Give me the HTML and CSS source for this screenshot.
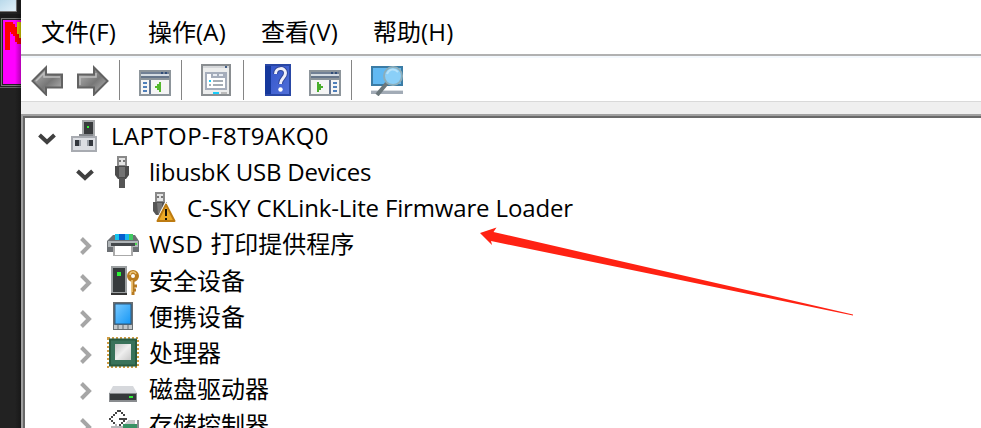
FILE: index.html
```html
<!DOCTYPE html>
<html lang="zh-CN">
<head>
<meta charset="utf-8">
<title>设备管理器</title>
<link rel="stylesheet" href="styles.css">
</head>
<body>
<div class="desktop">
  <svg class="backdrop" viewBox="0 0 21 428" shape-rendering="crispEdges">
    <defs><linearGradient id="sky" x2="1" y2="1"><stop stop-color="#b9d9ea"/><stop offset="1" stop-color="#e3f1fa"/></linearGradient>
    <linearGradient id="shade"><stop stop-color="#000" stop-opacity="0"/><stop offset="1" stop-color="#000" stop-opacity=".3"/></linearGradient></defs>
    <rect width="21" height="428" fill="#222"/>
    <rect width="16" height="11" fill="url(#sky)"/><path d="M16 0h1v12H0v-1h16z" fill="#777"/>
    <path d="M0 14h21v4H0z" fill="#1b1b1b"/>
    <path d="M1 18h20v1H2v66h19v1H1z" fill="#777"/><path d="M0 87h21v1H0z" fill="#666"/>
    <rect x="3" y="20" width="18" height="64" fill="#f0f"/>
    <path d="M17 22h4v16h-4v-4h-2v-6h2z" fill="#e3d800"/>
    <path d="M5 22h8v2h2v3h2v7h2v4h2v6h-4v-2h-2v-6h-2v-2h-2v-2h-1v18H5z" fill="#f00"/>
    <rect x="15" width="6" height="428" fill="url(#shade)"/>
  </svg>
  <main class="window">
    <nav class="menu">
      <span class="m1">文件<i>(F)</i></span><span class="m2">操作<i>(A)</i></span><span class="m3">查看<i>(V)</i></span><span class="m4">帮助<i>(H)</i></span>
    </nav>
    <div class="toolbar">
      <svg class="t-back" viewBox="0 0 32 32" width="32" height="32"><defs><linearGradient id="ar" x1="0" y1="0" x2="1" y2="1"><stop stop-color="#bbb"/><stop offset=".55" stop-color="#777"/><stop offset="1" stop-color="#bdbdbd"/></linearGradient></defs><path d="M1.500 17 15 3.500v7h16v13H15v7z" fill="url(#ar)" stroke="#626262" stroke-width="2"/><path d="M5 17 13 9v4h16" fill="none" stroke="#bdbdbd" stroke-width="1.500"/></svg>
      <svg class="t-next" viewBox="0 0 32 32" width="32" height="32"><path d="M30.500 17 17 3.500v7H1v13h16v7z" fill="url(#ar)" stroke="#626262" stroke-width="2"/><path d="M3 21v-8h16V9" fill="none" stroke="#bdbdbd" stroke-width="1.500"/></svg>
      <b class="sep s1"></b>
      <svg class="t-tree" viewBox="0 0 32 32" width="32" height="32" shape-rendering="crispEdges"><path d="M0 6h32v26H0z" fill="#8d959b"/><path d="M2 8h28v2H2z" fill="#718095"/><path d="M2 10h28v2H2z" fill="#d5dce2"/><path d="M2 12h28v2H2z" fill="#65758a"/><path d="M22 8h2v2h-2zm4 0h2v2h-2z" fill="#304d78"/><path d="M2 16h28v14H2z" fill="#f5f5f5"/><path d="M10 16h2v14h-2z" fill="#647692"/><path d="M4 18h4v2H4zm0 4h4v2H4zm0 4h4v2H4z" fill="#4f7fba"/><path d="M22 18v10h-2v-2h-2v-2h-2v-2h2v-2h2v-2z" fill="#53b82c"/></svg>
      <b class="sep s2"></b>
      <svg class="t-prop" viewBox="0 0 30 32" width="30" height="32" shape-rendering="crispEdges"><path d="M0 0h30v32H0z" fill="#8a8e91"/><path d="M2 2h26v28H2z" fill="#eceded"/><path d="M2 2h26v2H2z" fill="#d5d7da"/><path d="M24 2h2v2h-2z" fill="#435f87"/><path d="M4 8h22v18H4z" fill="#a5adbb"/><path d="M6 10h4v4h14v10H6z" fill="#fff"/><path d="M12 10h4v2h-4zm6 0h4v2h-4z" fill="#e9edf3"/><path d="M8 16h2v2H8zm4 12h6v2h-6z" fill="#18cdfb"/><path d="M12 16h10v2H12zm0 4h10v2H12zm-4 0h2v2H8z" fill="#a5adb5"/><path d="M20 28h6v2h-6z" fill="#bbb"/></svg>
      <b class="sep s3"></b>
      <svg class="t-help" viewBox="0 0 26 32" width="26" height="32"><defs><linearGradient id="hb" x2="1" y2="1"><stop stop-color="#3657cc"/><stop offset="1" stop-color="#506fd8"/></linearGradient></defs><path d="M0 0h26v32H0z" fill="#2947a5"/><path d="M0 2h6v28H0z" fill="#15389c"/><path d="M6 2h18v28H6z" fill="url(#hb)"/><path d="M10.500 10c0-7 10-7 10-1 0 5-5 5-5 11" fill="none" stroke="#31479a" stroke-width="5"/><path d="M10.500 10c0-7 10-7 10-1 0 5-5 5-5 11" fill="none" stroke="#f0f0fa" stroke-width="3"/><circle cx="15.500" cy="25.500" r="2.200" fill="#fff"/></svg>
      <svg class="t-act" viewBox="0 0 32 32" width="32" height="32" shape-rendering="crispEdges"><path d="M0 6h32v26H0z" fill="#8d959b"/><path d="M2 8h28v2H2z" fill="#718095"/><path d="M2 10h28v2H2z" fill="#d5dce2"/><path d="M2 12h28v2H2z" fill="#65758a"/><path d="M22 8h2v2h-2zm4 0h2v2h-2z" fill="#304d78"/><path d="M2 16h28v14H2z" fill="#f5f5f5"/><path d="M20 16h2v14h-2z" fill="#647692"/><path d="M24 18h4v2h-4zm0 4h4v2h-4zm0 4h4v2h-4z" fill="#4f7fba"/><path d="M8 18h2v2h2v2h2v2h-2v2h-2v2H8z" fill="#49ae2c"/></svg>
      <b class="sep s4"></b>
      <svg class="t-scan" viewBox="0 0 32 32" width="32" height="32"><path d="M0 2h32v20H0z" fill="#3b7ca5"/><path d="M2 4h28v16H2z" fill="#62b9f2"/><path d="M0 26h32v4H0z" fill="#a2abb6"/><path d="M0 26h32v1H0z" fill="#d9dee3"/><path d="m6 31 10-12" stroke="#6b777b" stroke-width="4"/><circle cx="22" cy="12" r="9" fill="#8acff8" stroke="#8caebb" stroke-width="2"/><path d="M16 10c2-5 7-6 11-2" fill="none" stroke="#b7e2fa" stroke-width="2"/></svg>
    </div>
    <div class="strip"></div>
    <section class="tree">
      <div class="row root">
        <svg class="chev open" viewBox="0 0 20 20" width="20" height="20"><path d="m2.500 6 7.500 7 7.500-7" fill="none" stroke="#404040" stroke-width="4"/></svg>
        <svg class="ico" viewBox="0 0 32 32" width="32" height="32" shape-rendering="crispEdges"><path d="M13 0h13v16H13z" fill="#a7a9ab"/><path d="M15 2h9v13h-9z" fill="#393b3d"/><path d="M18 6h2v2h-2z" fill="#35f536"/><path d="M10 14h14v3H10z" fill="#85888d"/><path d="M2 16h26v16H2z" fill="#a8abb1"/><path d="M4 18h22v12H4z" fill="#dcdee3"/><path d="M6 20h4v6H6zm14 0h4v6h-4z" fill="#34383e"/><path d="M10 20h2v6h-2zm8 0h2v6h-2z" fill="#9a9fa7"/></svg>
        <span class="w-root">LAPTOP-F8T9AKQ0</span>
      </div>
      <div class="row child">
        <svg class="chev open" viewBox="0 0 20 20" width="20" height="20"><path d="m2.500 6 7.500 7 7.500-7" fill="none" stroke="#404040" stroke-width="4"/></svg>
        <svg class="ico" viewBox="0 0 32 32" width="32" height="32"><path d="M10 0h10v10H10z" fill="#898989"/><path d="M12 2h6v7h-6z" fill="#e4e4e4"/><path d="M12 4h2v2h-2zm4 0h2v2h-2z" fill="#777"/><path d="M8 10h14v9l-3 4h-8l-3-4z" fill="#4b4b4b"/><path d="M12 11h6v10h-6z" fill="#737373"/><path d="M12 22h6v10h-6z" fill="#555"/></svg>
        <span class="w-usb">libusbK USB Devices</span>
      </div>
      <div class="row leaf">
        <svg class="ico" viewBox="0 0 32 32" width="32" height="32"><path d="M10 0h10v10H10z" fill="#898989"/><path d="M12 2h6v7h-6z" fill="#e4e4e4"/><path d="M12 4h2v2h-2zm4 0h2v2h-2z" fill="#777"/><path d="M8 10h14L14 23h-3l-3-4z" fill="#555"/><path d="M12 11h5v7l-4 4z" fill="#777"/><path d="M20.500 9 10.500 29h20z" fill="#fff"/><path d="m21 12.500-8.500 16.500h17z" fill="#edaa26" stroke="#bd7b11" stroke-width="2" stroke-linejoin="round"/><path d="M20 17h2v7h-2zm0 9h2v2h-2z" fill="#17130a"/></svg>
        <span class="w-loader">C-SKY CKLink-Lite Firmware Loader</span>
      </div>
      <div class="row child">
        <svg class="chev" viewBox="0 0 20 20" width="20" height="20"><path d="m6.500 2.500 7.500 7.500-7.500 7.500" fill="none" stroke="#a6a6a6" stroke-width="4"/></svg>
        <svg class="ico" viewBox="0 0 32 32" width="32" height="32"><path d="M6 7h22l4 6v11H0V13z" fill="#6c7074"/><path d="M1 13h30v6H1z" fill="#afb4b7"/><path d="M4 15h24v3H4z" fill="#45494c"/><path d="M8 6h4v6H8z" fill="#15c4ee"/><path d="M12 6h6v6h-6z" fill="#075dce"/><path d="M18 6h4v6h-4z" fill="#18b7ed"/><path d="M22 6h4v6h-4z" fill="#40c963"/><path d="M28 15h2v2h-2z" fill="#48dc4c"/><path d="M6 18h20v10H6z" fill="#aaa"/><path d="M8 18h16v9H8z" fill="#fff"/></svg>
        <span class="w-wsd"><i>WSD </i>打印提供程序</span>
      </div>
      <div class="row child shift">
        <svg class="chev" viewBox="0 0 20 20" width="20" height="20"><path d="m6.500 2.500 7.500 7.500-7.500 7.500" fill="none" stroke="#a6a6a6" stroke-width="4"/></svg>
        <svg class="ico" viewBox="0 0 32 32" width="32" height="32"><path d="M4 1h16v29H4z" fill="#9ca0a2"/><path d="M6 3h12v24H6z" fill="#363a3c"/><path d="M10 7h4v4h-4z" fill="#2bf335"/><path d="M4 28h16v2H4z" fill="#353535"/><g fill="none" stroke="#b87b20"><circle cx="26" cy="11" r="4" stroke-width="4"/><path d="M26 15v15m-1-9h5m-5 4h4" stroke-width="3"/></g><path d="M23 10c0-4 5-4 6-1M25 15v12" fill="none" stroke="#efc77a" stroke-width="1.500"/></svg>
        <span>安全设备</span>
      </div>
      <div class="row child">
        <svg class="chev" viewBox="0 0 20 20" width="20" height="20"><path d="m6.500 2.500 7.500 7.500-7.500 7.500" fill="none" stroke="#a6a6a6" stroke-width="4"/></svg>
        <svg class="ico" viewBox="0 0 32 32" width="32" height="32"><defs><linearGradient id="tb" x2="1" y2="1"><stop stop-color="#78c9ff"/><stop offset="1" stop-color="#1597f5"/></linearGradient></defs><path d="M6 1h20v28H6z" fill="#686e72"/><path d="M8 3h16v20H8z" fill="url(#tb)" stroke="#2b5b82"/><path d="M7 24h18v4H7z" fill="#c2c7ca"/><path d="M11 24v4m5-4v4m5-4v4" stroke="#92999d" stroke-width="2"/></svg>
        <span>便携设备</span>
      </div>
      <div class="row child">
        <svg class="chev" viewBox="0 0 20 20" width="20" height="20"><path d="m6.500 2.500 7.500 7.500-7.500 7.500" fill="none" stroke="#a6a6a6" stroke-width="4"/></svg>
        <svg class="ico" viewBox="0 0 32 32" width="32" height="32"><defs><linearGradient id="die" x2="1" y2="1"><stop stop-color="#c5c5c5"/><stop offset=".5" stop-color="#eee"/><stop offset="1" stop-color="#c8c8c8"/></linearGradient></defs><path d="M1 1h30v29H1z" fill="none" stroke="#d09c43" stroke-width="2" stroke-dasharray="2 2"/><path d="M2 1.500h28v28H2z" fill="#285a40"/><path d="M4 3.500h24v24H4z" fill="#39725a"/><path d="M8 7h16v16H8z" fill="url(#die)"/></svg>
        <span>处理器</span>
      </div>
      <div class="row child">
        <svg class="chev" viewBox="0 0 20 20" width="20" height="20"><path d="m6.500 2.500 7.500 7.500-7.500 7.500" fill="none" stroke="#a6a6a6" stroke-width="4"/></svg>
        <svg class="ico" viewBox="0 0 32 32" width="32" height="32"><path d="M6 13h20l4 7H2z" fill="#d6d8dc"/><path d="M2 20h28v9H2z" fill="#898c8f"/><path d="M3 21h26v6H3z" fill="#35393b"/><path d="M22 23h4v2h-4z" fill="#31ee3a"/></svg>
        <span>磁盘驱动器</span>
      </div>
      <div class="row child">
        <svg class="chev" viewBox="0 0 20 20" width="20" height="20"><path d="m6.500 2.500 7.500 7.500-7.500 7.500" fill="none" stroke="#a6a6a6" stroke-width="4"/></svg>
        <svg class="ico" viewBox="0 0 32 32" width="32" height="32" shape-rendering="crispEdges"><path d="M10 1h4v2h2v2h2v2h-2V5h-2V3h-4v2H8v2H6v2H4v2h2v2h2v2h2v2H8v-2H6v-2H4v-2H2V9h2V7h2V5h2V3h2zM12 9h8v2h-2v2h-2v2h-2v2h-2v-2h2v-2h2v-2h-4z" fill="#444"/><path d="m19 13 3-2h6v4H17z" fill="#c9cccd"/><path d="M16 15h14v7H16z" fill="#389365"/><path d="M30 11h2v10h-2z" fill="#898c8e"/><path d="M4 17h4v-2h2v2h6v5H4z" fill="#b6b8ba"/></svg>
        <span>存储控制器</span>
      </div>
      <svg class="pointer" viewBox="480 225 375 95" width="375" height="95"><path d="m480 233 16.500-5.500-3 4.500L853 314.500v1L491 241l1 4z" fill="#ff2213"/></svg>
    </section>
  </main>
</div>
</body>
</html>
```
FILE: styles.css
```css
* { box-sizing: border-box; }
body { margin: 0; overflow: hidden; font: 24px/36px "Open Sans", "Noto Sans CJK SC", sans-serif; color: #000; }
i { font-style: normal; }
svg { display: block; flex: none; }
.desktop { display: flex; width: 981px; height: 428px; overflow: hidden; background: #222; }
.backdrop { width: 21px; height: 428px; }
.window { width: 960px; height: 428px; background: #fff; overflow: hidden; }
.menu { display: flex; height: 56px; padding: 14px 0 0 20px; border-bottom: 2px solid #b1b1b1; white-space: nowrap; }
.menu span { width: 112px; }
.menu .m1 { width: 107px; }
.menu .m2 { width: 113px; }
.menu i { letter-spacing: .2px; }
.toolbar { display: flex; align-items: flex-start; height: 46px; padding: 6px 0 0 10px; border-top: 2px solid #f3f8fd; border-bottom: 1px solid #d9d9d9; }
.t-next { margin-left: 14px; }
.sep { flex: none; width: 1px; height: 40px; margin-top: -4px; background: #858585; }
.s1 { margin-left: 10px; }
.t-tree { margin-left: 19px; }
.s2 { margin-left: 10px; }
.t-prop { margin-left: 19px; }
.s3 { margin-left: 12px; }
.t-help { margin-left: 21px; }
.t-act { margin-left: 18px; }
.s4 { margin-left: 10px; }
.t-scan { margin-left: 19px; }
.strip { height: 12px; background: #efefef; }
.tree { position: relative; height: 314px; border-top: 2px solid #a0a0a0; border-left: 2px solid #a0a0a0; }
.tree::before { content: ""; display: block; height: 2px; background: #696969; }
.row { display: flex; align-items: center; height: 36px; border-left: 2px solid #696969; white-space: nowrap; }
.shift { height: 37px; padding-top: 1px; }
.root { padding-left: 12px; }
.child { padding-left: 50px; }
.leaf { padding-left: 120px; }
.chev { margin: 3px 12px 0 0; }
.chev.open { margin-top: 5px; }
.ico { margin-right: 10px; }
.w-root { letter-spacing: .43px; }
.w-usb { letter-spacing: -.22px; }
.w-loader { letter-spacing: -.15px; }
.w-wsd i { letter-spacing: .6px; }
.pointer { position: absolute; left: 457px; top: 109px; }
```
